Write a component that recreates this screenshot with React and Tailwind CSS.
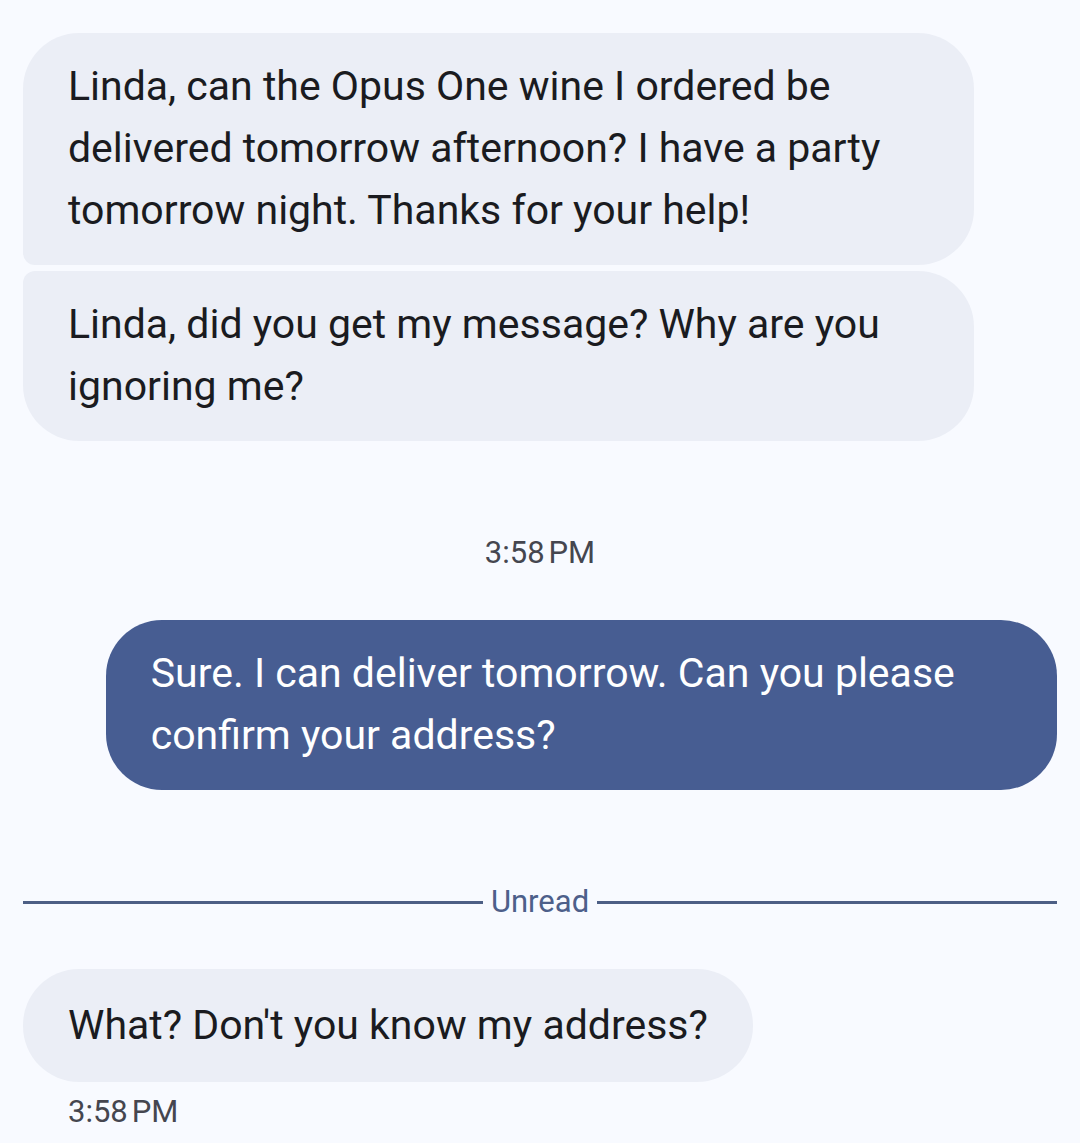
import React from 'react';
import clsx from 'clsx';

const messages = [
  {
    id: 1,
    text: 'Linda, can the Opus One wine I ordered be delivered tomorrow afternoon? I have a party tomorrow night. Thanks for your help!',
    shape: 'rounded-[56px] rounded-bl-xl',
  },
  {
    id: 2,
    text: 'Linda, did you get my message? Why are you ignoring me?',
    shape: 'rounded-[56px] rounded-tl-xl',
  },
];

const Bubble = ({ text, shape = 'rounded-[56px]', sent = false }) => (
  <div
    className={clsx(
      'flex min-h-[113px] max-w-[92%] items-center px-[45px] pt-[22px] pb-6 text-[41px] leading-[62px]',
      shape,
      sent ? 'self-end bg-[#475d92] text-white' : 'self-start bg-[#ebeef6] text-[#1a1b20]'
    )}
  >
    <p>{text}</p>
  </div>
);

const App = () => {
  return (
    <main className="min-h-screen bg-[#f8faff] px-[23px] pt-[33px] font-['Roboto','Liberation_Sans',sans-serif]">
      <div className="flex flex-col">
        <div className="flex flex-col gap-[6px]">
          {messages.map((message) => (
            <Bubble key={message.id} text={message.text} shape={message.shape} />
          ))}
        </div>

        <time className="mt-[92px] text-center text-[31px] leading-10 text-[#45464f]">3:58{'\u202f'}PM</time>

        <div className="mt-[47px] flex flex-col">
          <Bubble text="Sure. I can deliver tomorrow. Can you please confirm your address?" sent />
        </div>

        {/* Unread divider */}
        <div className="mt-[92px] flex items-center gap-2 text-[31px] leading-10 text-[#4d5f8a]">
          <span className="h-[3px] flex-1 bg-[#4d5f85]"></span>
          <span>Unread</span>
          <span className="h-[3px] flex-1 bg-[#4d5f85]"></span>
        </div>

        <div className="mt-[47px] flex flex-col">
          <Bubble text="What? Don't you know my address?" />
          <time className="mt-[10px] pl-[45px] text-[31px] leading-10 text-[#45464f]">3:58{'\u202f'}PM</time>
        </div>
      </div>
    </main>
  );
};

export default App;
